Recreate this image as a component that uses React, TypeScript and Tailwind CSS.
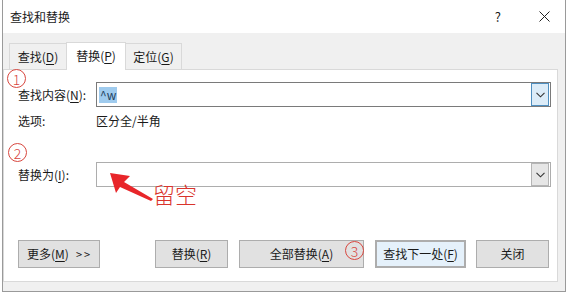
import React from "react";

const font = { fontFamily: '"Noto Sans CJK SC", "Noto Sans", sans-serif' };

function Key({ k }: { k: string }) {
  return <span className="underline underline-offset-2">{k}</span>;
}

function Chevron() {
  return (
    <svg width="9" height="6" viewBox="0 0 9 6" fill="none">
      <polyline points="0.5,0.8 4.5,4.8 8.5,0.8" stroke="#333" strokeWidth="1.1" />
    </svg>
  );
}

function Mark({ n, className }: { n: string; className: string }) {
  return (
    <div
      className={`absolute w-[19px] h-[19px] rounded-full border border-[#d8473f] flex items-center justify-center text-[14px] leading-none font-light text-[#d8473f] ${className}`}
    >
      {n}
    </div>
  );
}

function Btn({ children, className = "" }: { children: React.ReactNode; className?: string }) {
  return (
    <div
      className={`h-[28px] flex items-center justify-center border border-[#adadad] bg-[#e1e1e1] text-[12px] text-[#1a1a1a] ${className}`}
    >
      {children}
    </div>
  );
}

export default function App() {
  return (
    <div className="relative w-[567px] h-[293px] bg-white overflow-hidden" style={font}>
      <div className="ml-[2px] w-[564px] h-[292px] border-x border-b border-[#9a9a9a] flex flex-col bg-[#f0f0f0]">
        {/* title bar */}
        <div className="h-[33px] bg-white flex items-center pl-[7px] pr-[15px] text-[12px] text-[#1a1a1a]">
          <span>查找和替换</span>
          <span className="ml-auto mr-[38px] text-[13px]">?</span>
          <svg width="11" height="11" viewBox="0 0 11 11">
            <path d="M0.5 0.5 L10.5 10.5 M10.5 0.5 L0.5 10.5" stroke="#222" strokeWidth="1" />
          </svg>
        </div>

        {/* tabs */}
        <div className="h-[36px] flex items-end pl-[6px] text-[12px] text-[#1a1a1a]">
          <div className="h-[26px] w-[57px] border-t border-l border-[#d9d9d9] flex items-center justify-center pt-[1px]">
            查找(<Key k="D" />)
          </div>
          <div className="h-[28px] w-[60px] bg-white border-t border-x border-[#d9d9d9] -mb-px relative z-10 flex items-center justify-center pb-[1px]">
            替换(<Key k="P" />)
          </div>
          <div className="h-[26px] w-[56px] border-t border-r border-[#d9d9d9] flex items-center justify-center pt-[1px]">
            定位(<Key k="G" />)
          </div>
        </div>

        {/* panel */}
        <div className="w-[555px] h-[213px] bg-white border border-[#d9d9d9] flex flex-col pt-[12px] pl-[14px] pr-[6px] text-[12px] text-[#1a1a1a]">
          <div className="flex items-center h-[25px]">
            <div className="w-[78px]">
              查找内容(<Key k="N" />):
            </div>
            <div className="flex-1 h-[25px] border border-[#7a7a7a] flex items-center pl-[2px]">
              <span className="bg-[#9fcbee] text-[#23415e] px-[1px] leading-[16px]">^w</span>
              <div className="ml-auto mr-px h-[23px] w-[18px] border border-[#4f8fc0] bg-[#dcecf8] flex items-center justify-center">
                <Chevron />
              </div>
            </div>
          </div>
          <div className="flex items-center h-[20px] mt-[4px]">
            <div className="w-[78px]">选项:</div>
            <div>区分全/半角</div>
          </div>
          <div className="flex items-center h-[25px] mt-[31px]">
            <div className="w-[78px]">
              替换为(<Key k="I" />):
            </div>
            <div className="flex-1 h-[25px] border border-[#adadad] flex items-center">
              <div className="ml-auto mr-px h-[23px] w-[18px] border border-[#b5b5b5] bg-[#e6e6e6] flex items-center justify-center">
                <Chevron />
              </div>
            </div>
          </div>
          <div className="flex items-center mt-[53px]">
            <Btn className="w-[82px] justify-start pl-[8px]">
              更多(<Key k="M" />)<span className="ml-[7px] text-[11px] tracking-[2px]">&gt;&gt;</span>
            </Btn>
            <Btn className="w-[73px] ml-[55px]">
              替换(<Key k="R" />)
            </Btn>
            <Btn className="w-[125px] ml-[11px]">
              全部替换(<Key k="A" />)
            </Btn>
            <Btn className="w-[91px] ml-[11px] border-2 border-[#2f7fc4] bg-[#e5f1fb]">
              查找下一处(<Key k="F" />)
            </Btn>
            <Btn className="w-[73px] ml-[10px]">关闭</Btn>
          </div>
        </div>
      </div>

      {/* annotations */}
      <Mark n="1" className="left-[7px] top-[69px]" />
      <Mark n="2" className="left-[8px] top-[143px]" />
      <Mark n="3" className="left-[345px] top-[241px]" />
      <svg className="absolute left-0 top-0" width="567" height="293" viewBox="0 0 567 293">
        <polygon
          points="110,173 130,176 124,182 153,199 151,201 120,187 116,193"
          fill="#e8262a"
        />
      </svg>
      <div className="absolute left-[153px] top-[178px] text-[22px] leading-[30px] font-light text-[#d9342c]">留空</div>
    </div>
  );
}
